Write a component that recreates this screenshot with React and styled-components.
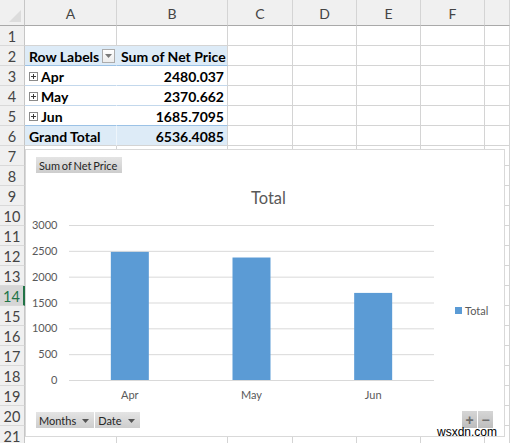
import React from 'react';
import styled, { createGlobalStyle } from 'styled-components';

const GlobalStyle = createGlobalStyle`
	* { box-sizing: border-box; }
	body {
		margin: 0;
		background: #fff;
		font-family: Lato, 'Open Sans', sans-serif;
	}
`;

const COLS = [
	{ key: 'A', w: 92 },
	{ key: 'B', w: 111 },
	{ key: 'C', w: 65 },
	{ key: 'D', w: 64 },
	{ key: 'E', w: 64 },
	{ key: 'F', w: 64 },
	{ key: '', w: 25 },
];

const ROWS = Array.from({ length: 21 }, (_, i) => i + 1);
const SELECTED_ROW = 14;

const PIVOT = {
	2: { a: 'Row Labels', b: 'Sum of Net Price', tone: 'head' },
	3: { a: 'Apr', b: '2480.037', tone: 'body', value: 2480.037 },
	4: { a: 'May', b: '2370.662', tone: 'body', value: 2370.662 },
	5: { a: 'Jun', b: '1685.7095', tone: 'body', value: 1685.7095 },
	6: { a: 'Grand Total', b: '6536.4085', tone: 'total' },
};

const BARS = [PIVOT[3], PIVOT[4], PIVOT[5]];

// chart geometry, in page pixels
const OX = 26;
const OY = 210;
const PLOT_L = 69;
const PLOT_R = 434;
const PLOT_TOP = 225;
const PLOT_BASE = 380;
const MAX = 3000;
const TICKS = [0, 500, 1000, 1500, 2000, 2500, 3000];

const Page = styled.div`
	position: relative;
	width: 510px;
	height: 443px;
	overflow: hidden;
	background: #fff;
`;

const Sheet = styled.div`
	display: grid;
	grid-template-columns: 25px ${COLS.map((c) => c.w + 'px').join(' ')};
	grid-template-rows: 26px;
	grid-auto-rows: 20px;
`;

const Corner = styled.div`
	background: #f0f0f0;
	border-right: 1px solid #c6c6c6;
	border-bottom: 1px solid #a9a9a9;
	display: flex;
	align-items: flex-end;
	justify-content: flex-end;
	padding: 0 3px 3px 0;
`;

const ColHead = styled.div`
	background: #f0f0f0;
	border-right: 1px solid #d4d4d4;
	border-bottom: 1px solid #a9a9a9;
	display: flex;
	align-items: center;
	justify-content: center;
	font-size: 14px;
	color: #444;
	padding-top: 1px;
`;

const RowHead = styled.div`
	background: ${(p) => (p.$selected ? '#d6d6d6' : '#f0f0f0')};
	border-right: ${(p) => (p.$selected ? '2px solid #217346' : '1px solid #c6c6c6')};
	border-bottom: 1px solid #d9d9d9;
	display: flex;
	align-items: center;
	justify-content: center;
	font-size: 14.5px;
	color: ${(p) => (p.$selected ? '#217346' : '#444')};
	padding-top: 2px;
`;

const Cell = styled.div`
	border-right: 1px solid ${(p) => p.$rline || '#d4d4d4'};
	border-bottom: 1px solid ${(p) => p.$line || '#d4d4d4'};
	background: ${(p) => p.$bg || '#fff'};
	display: flex;
	align-items: center;
	justify-content: ${(p) => (p.$right ? 'flex-end' : 'flex-start')};
	padding: 1px ${(p) => (p.$tight ? '1px' : '3px')} 0 4px;
	font-size: 14px;
	font-weight: 700;
	color: #000;
	white-space: nowrap;
	overflow: hidden;
`;

const FilterBtn = styled.span`
	margin-left: auto;
	width: 13px;
	height: 14px;
	border: 1px solid #acacac;
	background: linear-gradient(#ffffff, #ececec);
	display: flex;
	align-items: center;
	justify-content: center;
`;

const ExpandIcon = styled.svg`
	margin-right: 3px;
	flex-shrink: 0;
`;

const Chart = styled.div`
	position: absolute;
	left: 25px;
	top: 149px;
	width: 480px;
	height: 288px;
	border: 1px solid #d9d9d9;
	background: #fff;
	display: flex;
	flex-direction: column;
	padding: 7px 11px 0 10px;
`;

const FieldRow = styled.div`
	display: flex;
	align-items: flex-end;
	gap: 1px;
`;

const FieldButton = styled.div`
	height: 16px;
	padding: 0 5px 0 3px;
	background: linear-gradient(#e4e4e4, #cdcdcd);
	color: #262626;
	font-size: 11px;
	display: flex;
	align-items: center;
	gap: 6px;
	white-space: nowrap;
	word-spacing: ${(p) => (p.$tight ? '-1px' : '0')};
`;

const Caret = styled.svg`
	margin-top: 1px;
`;

const Title = styled.div`
	margin-top: 13px;
	height: 24px;
	line-height: 24px;
	text-align: center;
	font-size: 16.5px;
	color: #595959;
	padding-left: 8px;
`;

const Body = styled.div`
	display: flex;
	align-items: center;
	margin-left: -10px;
`;

const Legend = styled.div`
	margin-left: 15px;
	padding-top: 5px;
	display: flex;
	align-items: center;
	gap: 3px;
	font-size: 11px;
	color: #595959;
`;

const Swatch = styled.span`
	width: 7px;
	height: 7px;
	background: #5b9bd5;
`;

const Footer = styled.div`
	margin-top: 5px;
	display: flex;
	align-items: flex-end;
	justify-content: space-between;
`;

const ZoomGroup = styled.div`
	display: flex;
	gap: 1px;
`;

const ZoomBtn = styled.div`
	width: 15px;
	height: 17px;
	background: linear-gradient(#d6d6d6, #bdbdbd);
	color: #6e6e6e;
	font-size: 14px;
	font-weight: 700;
	font-family: 'Liberation Sans', sans-serif;
	display: flex;
	align-items: center;
	justify-content: center;
`;

const Watermark = styled.div`
	position: absolute;
	left: 437px;
	top: 426px;
	font-family: 'Liberation Sans', Arial, sans-serif;
	font-size: 12px;
	line-height: 13px;
	color: #000;
`;

const cellProps = (tone, col) => {
	if (tone === 'head')
		return { $bg: '#ddebf7', $line: '#9bc2e6', $rline: col === 'A' ? '#ddebf7' : '#d4d4d4' };
	if (tone === 'total')
		return { $bg: '#ddebf7', $line: '#d4d4d4', $rline: col === 'A' ? '#eef5fb' : '#d4d4d4' };
	return { $bg: '#fff', $line: '#c3d8ec', $rline: col === 'A' ? '#fff' : '#d4d4d4' };
};

const PivotCells = ({ row }) => {
	const p = PIVOT[row];
	const next = PIVOT[row + 1];
	const a = cellProps(p.tone, 'A');
	const b = cellProps(p.tone, 'B');
	if (next && next.tone === 'total') {
		a.$line = '#9bc2e6';
		b.$line = '#9bc2e6';
	}
	return (
		<>
			<Cell {...a} $tight={p.tone === 'head'}>
				{p.tone === 'body' && (
					<ExpandIcon width='9' height='9' viewBox='0 0 9 9'>
						<rect x='0.5' y='0.5' width='8' height='8' fill='#fff' stroke='#8a8a8a' />
						<path d='M2 4.5h5M4.5 2v5' stroke='#3a3a3a' strokeWidth='1' />
					</ExpandIcon>
				)}
				{p.a}
				{p.tone === 'head' && (
					<FilterBtn>
						<svg width='7' height='4' viewBox='0 0 7 4'>
							<path d='M0 0h7L3.5 4z' fill='#7a7a7a' />
						</svg>
					</FilterBtn>
				)}
			</Cell>
			<Cell {...b} $right={p.tone !== 'head'}>
				{p.b}
			</Cell>
		</>
	);
};

const Plot = () => {
	const w = PLOT_R - PLOT_L;
	const slot = w / BARS.length;
	const scale = (PLOT_BASE - PLOT_TOP) / MAX;
	return (
		<svg width='414' height='196' viewBox={`${OX} ${OY} 414 196`}>
			{TICKS.map((t) => {
				const y = PLOT_BASE - t * scale;
				return (
					<g key={t}>
						<line x1={PLOT_L} x2={PLOT_R} y1={y + 0.5} y2={y + 0.5} stroke='#d9d9d9' />
						<text
							x='57.5'
							y={y + 4}
							textAnchor='end'
							fontSize='11'
							fill='#595959'
							fontFamily='Lato, sans-serif'>
							{t}
						</text>
					</g>
				);
			})}
			{BARS.map((bar, i) => {
				const cx = PLOT_L + slot * i + slot / 2;
				const h = bar.value * scale;
				return (
					<g key={bar.a}>
						<rect x={cx - 19} y={PLOT_BASE - h} width='38' height={h} fill='#5b9bd5' />
						<text
							x={cx}
							y='399'
							textAnchor='middle'
							fontSize='11'
							fill='#595959'
							fontFamily='Lato, sans-serif'>
							{bar.a}
						</text>
					</g>
				);
			})}
		</svg>
	);
};

const DownCaret = () => (
	<Caret width='7' height='4' viewBox='0 0 7 4'>
		<path d='M0 0h7L3.5 4z' fill='#555' />
	</Caret>
);

const App = () => {
	return (
		<Page>
			<GlobalStyle />
			<Sheet>
				<Corner>
					<svg width='12' height='12' viewBox='0 0 12 12'>
						<path d='M12 0v12H0z' fill='#dcdcdc' />
					</svg>
				</Corner>
				{COLS.map((c, i) => (
					<ColHead key={i}>{c.key}</ColHead>
				))}
				{ROWS.map((r) => (
					<React.Fragment key={r}>
						<RowHead $selected={r === SELECTED_ROW}>{r}</RowHead>
						{PIVOT[r] ? (
							<>
								<PivotCells row={r} />
								{COLS.slice(2).map((c, i) => (
									<Cell key={i} />
								))}
							</>
						) : (
							COLS.map((c, i) => <Cell key={i} />)
						)}
					</React.Fragment>
				))}
			</Sheet>

			<Chart>
				<FieldRow>
					<FieldButton $tight>Sum of Net Price</FieldButton>
				</FieldRow>
				<Title>Total</Title>
				<Body>
					<Plot />
					<Legend>
						<Swatch />
						Total
					</Legend>
				</Body>
				<Footer>
					<FieldRow>
						<FieldButton>
							Months <DownCaret />
						</FieldButton>
						<FieldButton>
							Date <DownCaret />
						</FieldButton>
					</FieldRow>
					<ZoomGroup>
						<ZoomBtn>+</ZoomBtn>
						<ZoomBtn>−</ZoomBtn>
					</ZoomGroup>
				</Footer>
			</Chart>

			<Watermark>wsxdn.com</Watermark>
		</Page>
	);
};

export default App;
